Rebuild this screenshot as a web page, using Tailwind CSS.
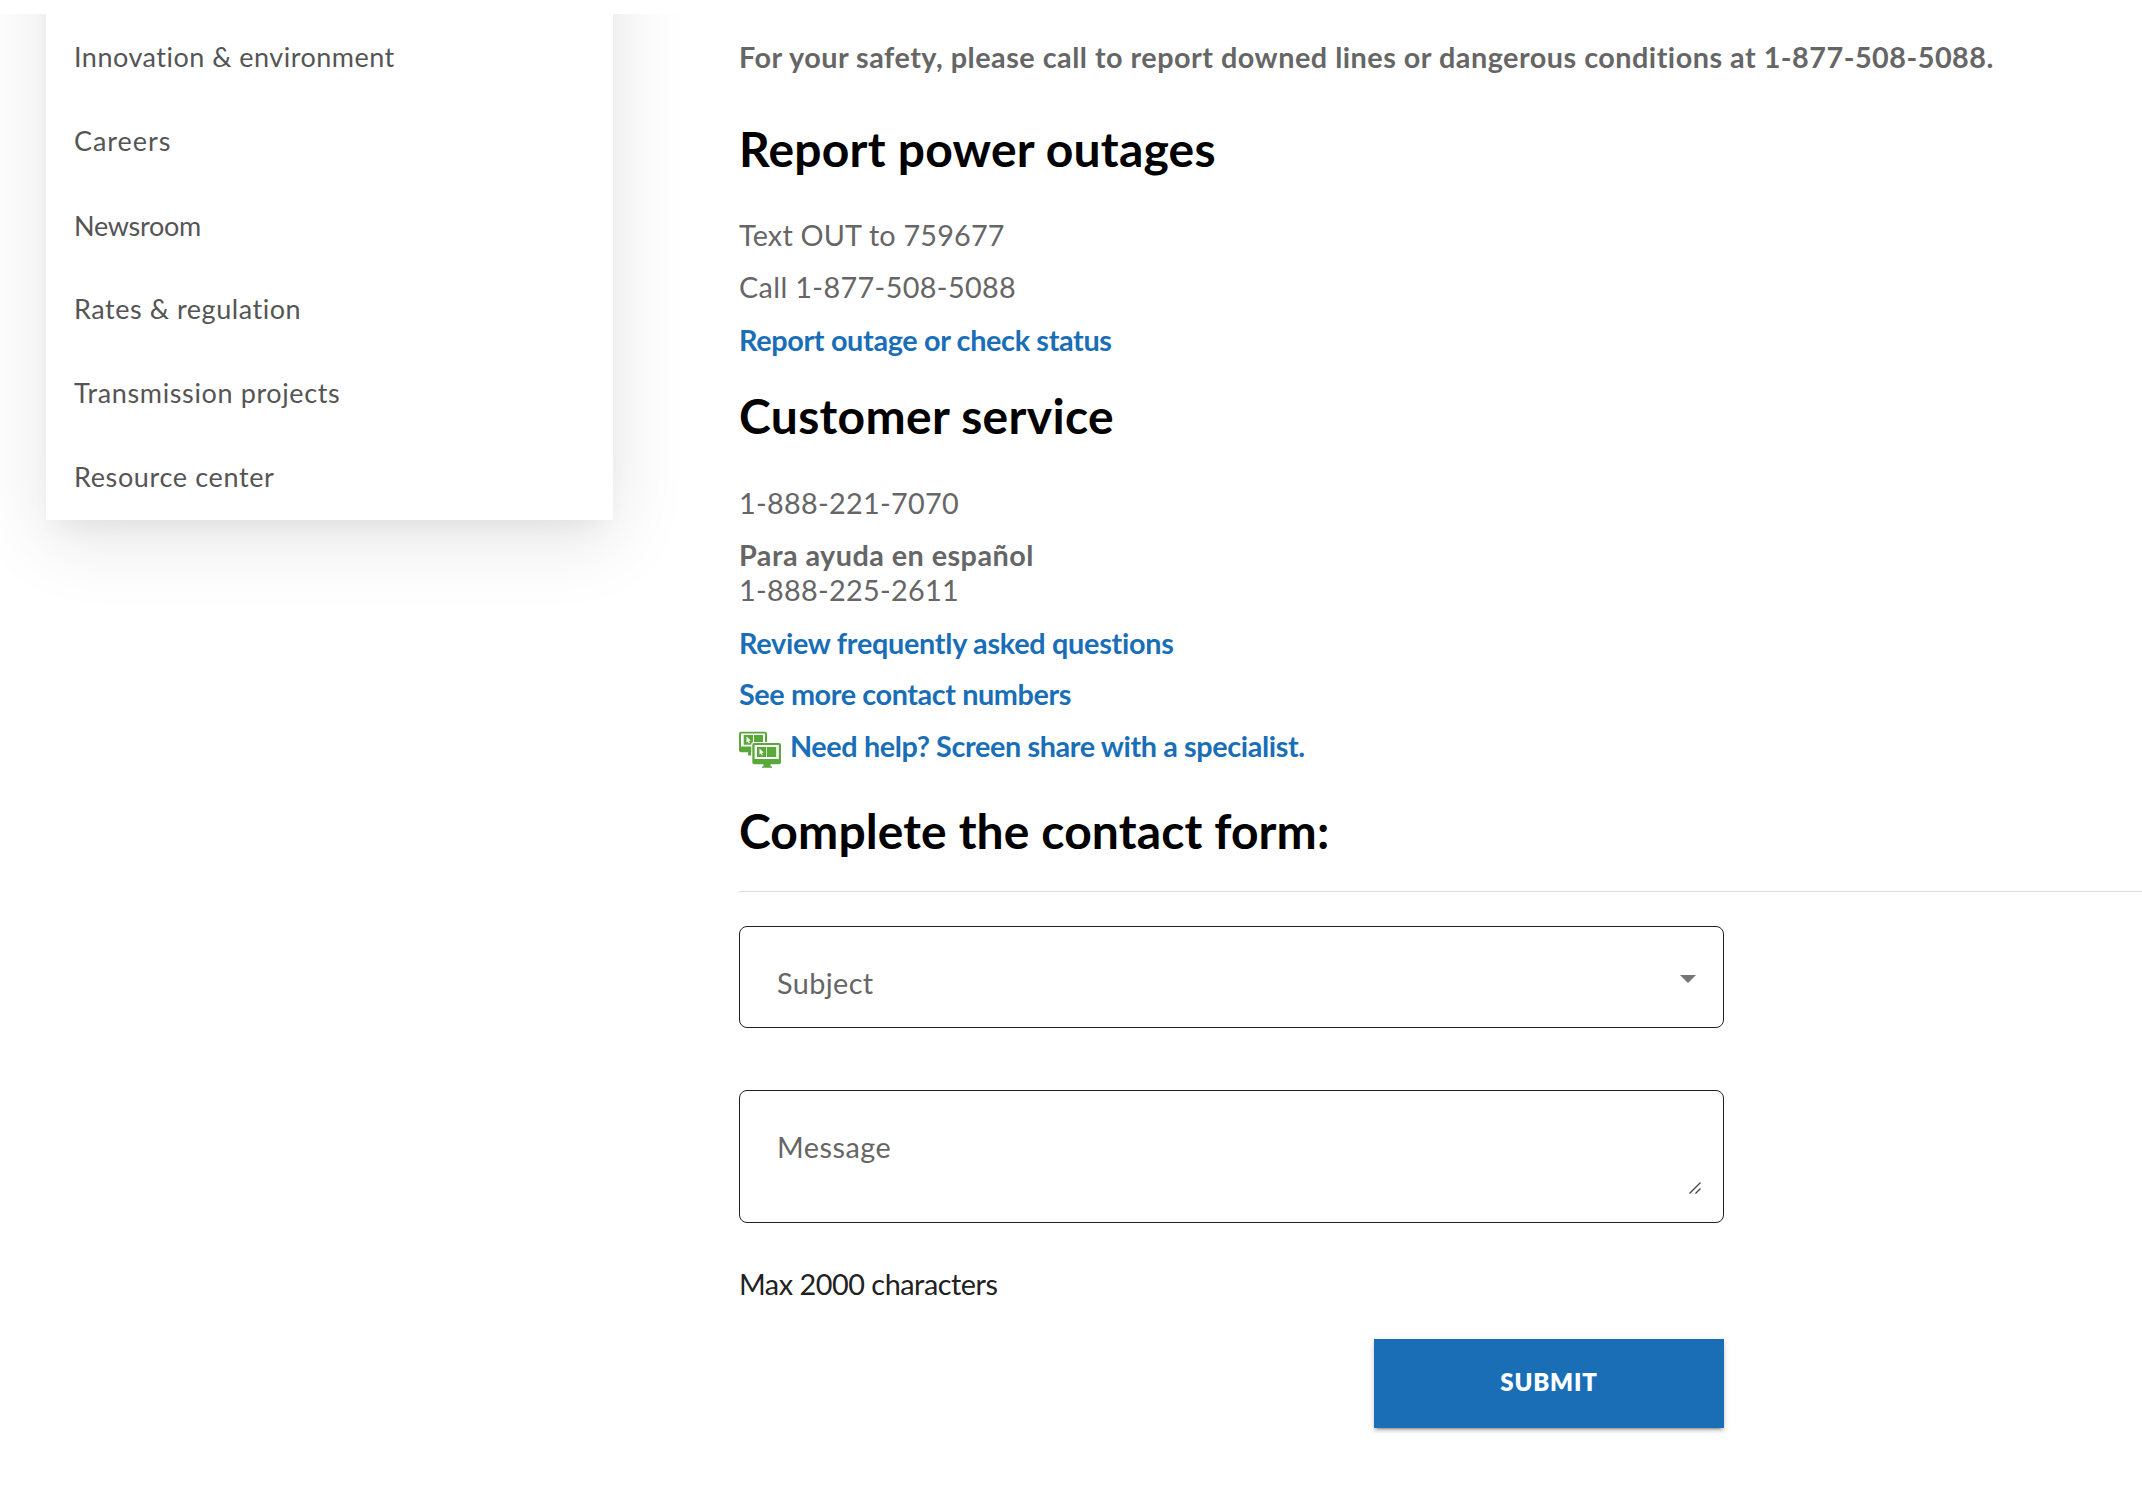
<!DOCTYPE html>
<html lang="en">

<head>
    <meta charset="UTF-8">
    <meta name="viewport" content="width=device-width, initial-scale=1">
    <title>Contact us</title>
    <script src="https://cdn.jsdelivr.net/npm/@tailwindcss/browser@4"></script>
</head>

<body class="bg-white font-['Lato',sans-serif] h-screen overflow-hidden pt-[14px]">

    <div class="flex h-full overflow-hidden">

        <!-- Sidebar -->
        <aside class="w-[739px] shrink-0 pl-[46px]">
            <nav class="-mt-[120px] pt-[121px] w-[567px] h-[626px] bg-white text-[27px] leading-[84px] text-[#555] shadow-[0_18px_72px_rgba(0,0,0,0.11),0_16px_24px_-10px_rgba(0,0,0,0.05)]">
                <ul class="pl-7">
                    <li><a href="#" class="block tracking-[0.49px]">Innovation &amp; environment</a></li>
                    <li><a href="#" class="block tracking-[0.95px]">Careers</a></li>
                    <li class="pt-px -mb-px"><a href="#" class="block tracking-[-0.28px]">Newsroom</a></li>
                    <li><a href="#" class="block tracking-[0.55px]">Rates &amp; regulation</a></li>
                    <li><a href="#" class="block tracking-[0.62px]">Transmission projects</a></li>
                    <li><a href="#" class="block tracking-[0.64px]">Resource center</a></li>
                </ul>
            </nav>
        </aside>

        <!-- Contact info -->
        <main class="flex-1 min-w-0 pt-[26px] text-[28.8px] leading-[35px] text-[#666]">
            <p class="font-bold tracking-[0.49px] whitespace-nowrap">For your safety, please call to report downed lines or dangerous conditions at 1-877-508-5088.</p>

            <h2 class="mt-[45px] text-5xl leading-[58px] font-bold text-black tracking-[0.22px]">Report power outages</h2>
            <p class="mt-10 tracking-[0.18px]">Text OUT to 759677</p>
            <p class="mt-[17px] tracking-[0.36px]">Call 1-877-508-5088</p>
            <p class="mt-[18px]"><a href="#" class="font-bold text-[#196eb7] tracking-[-0.34px]">Report outage or check status</a></p>

            <h2 class="mt-[29px] text-5xl leading-[58px] font-bold text-black tracking-[0.33px]">Customer service</h2>
            <p class="mt-[41px] tracking-[0.3px]">1-888-221-7070</p>
            <p class="mt-[17px] tracking-[0.3px]"><strong class="font-bold tracking-[0.45px]">Para ayuda en español</strong><br>1-888-225-2611</p>
            <p class="mt-[18px]"><a href="#" class="font-bold text-[#196eb7] tracking-[-0.28px]">Review frequently asked questions</a></p>
            <p class="mt-4"><a href="#" class="font-bold text-[#196eb7] tracking-[-0.4px]">See more contact numbers</a></p>
            <div class="mt-[17px] flex h-[35px]">
                <svg class="mt-[2px] mr-[9px] shrink-0" width="42" height="37" viewBox="0 0 42 37" fill="#5aa83a">
                    <rect x="0" y="0.7" width="28" height="20.6" rx="2" />
                    <path d="M9 21h3v3.5H9z" />
                    <rect x="2" y="2.5" width="24" height="13" fill="#fff" />
                    <path d="M4.7 3.9h9.3v9.8H4.7zM15 3.9h9v9.8h-9z" />
                    <path d="M7.5 5.5v6l1.4-1 .9 2 1-.5-.9-2 1.8-.4z" fill="#fff" />
                    <rect x="12.3" y="11" width="31" height="24" rx="2" fill="#fff" />
                    <rect x="13.3" y="12" width="28.7" height="21.3" rx="2" />
                    <path d="M24.5 33h7v2l1.5.8v.9h-10v-.9l1.5-.8z" />
                    <rect x="15.6" y="14" width="24.2" height="14" fill="#fff" />
                    <path d="M18 16h9v10h-9zM27.7 16h9.5v10h-9.5z" />
                    <path d="M20.5 17.5v6l1.4-1 .9 2 1-.5-.9-2 1.8-.4z" fill="#fff" />
                </svg>
                <a href="#" class="font-bold text-[#196eb7] tracking-[-0.38px]">Need help? Screen share with a specialist.</a>
            </div>

            <h2 class="mt-[38px] text-5xl leading-[58px] font-bold text-black tracking-[0.12px]">Complete the contact form:</h2>
            <hr class="mt-[31px] border-t border-[#ddd]">

            <!-- Contact form -->
            <form class="mt-[34px] w-[985px]">
                <div class="flex h-[102px] items-center justify-between rounded-[8px] border border-[#212121] pl-[37px] pr-[27px]">
                    <span class="pt-3 tracking-[0.4px]">Subject</span>
                    <svg class="mt-1" width="16" height="8" viewBox="0 0 16 8" fill="#757575">
                        <path d="M0 0h16l-8 8z" />
                    </svg>
                </div>

                <div class="mt-[62px] flex h-[133px] justify-between rounded-[8px] border border-[#212121] pl-[37px] pr-[22px]">
                    <span class="pt-[39px] tracking-[0.5px]">Message</span>
                    <svg class="mt-[91px]" width="12" height="12" viewBox="0 0 12 12" fill="none" stroke="#444" stroke-width="1.3">
                        <path d="M0.5 11.5l11-11M6.5 11.5l5-5" />
                    </svg>
                </div>

                <p class="mt-[44px] text-[#212121] tracking-[-0.46px]">Max 2000 characters</p>

                <div class="mt-[37px] flex justify-end">
                    <button type="submit"
                        class="h-[89px] w-[350px] bg-[#196eb6] pb-[3px] text-2xl font-extrabold tracking-[0.8px] text-white shadow-[0_4.5px_1.5px_-3px_rgba(0,0,0,0.2),0_3px_3px_rgba(0,0,0,0.14),0_1.5px_7.5px_rgba(0,0,0,0.12)]">
                        SUBMIT
                    </button>
                </div>
            </form>
        </main>
    </div>

</body>

</html>
